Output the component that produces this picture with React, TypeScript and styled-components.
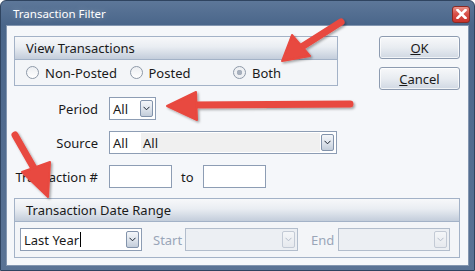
import { createGlobalStyle, styled } from 'styled-components';

const GlobalStyle = createGlobalStyle`
  html, body {
    margin: 0;
    padding: 0;
    background: #ffffff;
  }
  body {
    font-family: 'Noto Sans', 'Open Sans', sans-serif;
    font-size: 13px;
    color: #1a1a1a;
  }
`;

function Chevron({ faded }: { faded?: boolean }) {
  return (
    <svg width="7" height="5" viewBox="0 0 7 5">
      <path
        d="M0.5 0.8 L3.5 3.8 L6.5 0.8"
        fill="none"
        stroke={faded ? '#b4bdca' : '#1c2430'}
        strokeWidth="1"
      />
    </svg>
  );
}

function ComboBox({
  width,
  value,
  extra,
  disabled,
  caret,
}: {
  width: number;
  value?: string;
  extra?: string;
  disabled?: boolean;
  caret?: boolean;
}) {
  return (
    <Combo $width={width} $disabled={disabled}>
      <ComboValue>
        {value}
        {caret && <Caret />}
      </ComboValue>
      {extra !== undefined && <ComboExtra>{extra}</ComboExtra>}
      <DropButton $disabled={disabled}>
        <Chevron faded={disabled} />
      </DropButton>
    </Combo>
  );
}

function Radio({ label, checked }: { label: string; checked?: boolean }) {
  return (
    <RadioItem>
      <RadioCircle $checked={checked} />
      <span>{label}</span>
    </RadioItem>
  );
}

function Arrows() {
  const color = '#e8483f';
  return (
    <ArrowLayer width="475" height="271" viewBox="0 0 475 271">
      <defs>
        <filter id="shadow" x="-20%" y="-20%" width="140%" height="140%">
          <feDropShadow dx="1.5" dy="1.5" stdDeviation="1.2" floodColor="#000" floodOpacity="0.35" />
        </filter>
      </defs>
      <g filter="url(#shadow)" fill={color} stroke={color} strokeLinecap="round" strokeLinejoin="round">
        {/* arrow to "Both" */}
        <line x1="341" y1="22" x2="300" y2="48" strokeWidth="7" />
        <polygon points="282,61 292,35 310,56" strokeWidth="2" />
        {/* arrow to Period */}
        <line x1="350" y1="104" x2="192" y2="105" strokeWidth="7" />
        <polygon points="167,106 196,92 197,120" strokeWidth="2" />
        {/* arrow to date range */}
        <line x1="15" y1="135" x2="35" y2="170" strokeWidth="7" />
        <polygon points="48,197 22,172 50,162" strokeWidth="2" />
      </g>
    </ArrowLayer>
  );
}

export default function App() {
  return (
    <>
      <GlobalStyle />
      <Window>
        <TitleBar>
          <Title>Transaction Filter</Title>
          <CloseButton>
            <svg width="11" height="10" viewBox="0 0 11 10">
              <path d="M1.5 1 L9.5 9 M9.5 1 L1.5 9" stroke="#fff" strokeWidth="2.6" strokeLinecap="square" />
            </svg>
          </CloseButton>
        </TitleBar>
        <Client>
          <TopArea>
            <LeftColumn>
              <Group>
                <GroupHeader>View Transactions</GroupHeader>
                <RadioRow>
                  <Radio label="Non-Posted" />
                  <Radio label="Posted" />
                  <Radio label="Both" checked />
                </RadioRow>
              </Group>
              <FormRows>
                <FormRow>
                  <Label>Period</Label>
                  <ComboBox width={47} value="All" />
                </FormRow>
                <FormRow>
                  <Label>Source</Label>
                  <ComboBox width={228} value="All" extra="All" />
                </FormRow>
                <FormRow>
                  <Label>Transaction #</Label>
                  <TextInput $width={63} />
                  <ToLabel>to</ToLabel>
                  <TextInput $width={63} />
                </FormRow>
              </FormRows>
            </LeftColumn>
            <ButtonColumn>
              <DialogButton>
                <u>O</u>K
              </DialogButton>
              <DialogButton>
                <u>C</u>ancel
              </DialogButton>
            </ButtonColumn>
          </TopArea>
          <Group>
            <GroupHeader>Transaction Date Range</GroupHeader>
            <DateRow>
              <ComboBox width={122} value="Last Year" caret />
              <DimLabel $width={43} $indent={11}>Start</DimLabel>
              <ComboBox width={113} disabled />
              <DimLabel $width={40} $indent={13}>End</DimLabel>
              <ComboBox width={112} disabled />
            </DateRow>
          </Group>
        </Client>
        <Arrows />
      </Window>
    </>
  );
}

const Window = styled.div`
  position: relative;
  width: 475px;
  height: 271px;
  box-sizing: border-box;
  display: flex;
  flex-direction: column;
  padding: 0 5px 4px 5px;
  background: linear-gradient(to bottom, #5d7799 0px, #4a668a 24px, #5a7395 100%);
  border: 1px solid #2f4460;
  border-radius: 6px 6px 0 0;
  overflow: hidden;
`;

const TitleBar = styled.div`
  height: 24px;
  display: flex;
  align-items: center;
  justify-content: space-between;
  padding-left: 7px;
`;

const Title = styled.div`
  font-family: 'Noto Sans', sans-serif;
  font-size: 11.5px;
  color: #ffffff;
  text-shadow: 0 0 6px rgba(255, 255, 255, 0.35);
`;

const CloseButton = styled.div`
  width: 18px;
  height: 17px;
  margin-top: 2px;
  margin-right: -1px;
  box-sizing: border-box;
  display: flex;
  align-items: center;
  justify-content: center;
  border: 1px solid #8a2a24;
  border-radius: 3px;
  background: linear-gradient(to bottom, #e9938a 0%, #d9524a 45%, #c9322a 100%);
`;

const Client = styled.div`
  flex: 1;
  box-sizing: border-box;
  display: flex;
  flex-direction: column;
  gap: 10px;
  padding: 10px 8px 0 7px;
  background: #f5f7fa;
  border: 1px solid #8396b0;
`;

const TopArea = styled.div`
  display: flex;
  justify-content: space-between;
`;

const LeftColumn = styled.div`
  width: 324px;
  display: flex;
  flex-direction: column;
`;

const Group = styled.div`
  border: 1px solid #a3b2c7;
  background: #f3f5f8;
`;

const GroupHeader = styled.div`
  height: 22px;
  display: flex;
  align-items: center;
  padding-left: 11px;
  font-size: 13px;
  color: #1a1a1a;
  background: linear-gradient(to bottom, #f7f8fa 0%, #e9edf2 45%, #c3cddb 100%);
  border-bottom: 1px solid #a3b2c7;
  border-radius: 3px 3px 0 0;
`;

const RadioRow = styled.div`
  height: 25px;
  display: flex;
  align-items: center;
  padding-left: 11px;
`;

const RadioItem = styled.div`
  width: 103.5px;
  display: flex;
  align-items: center;
  gap: 6px;
`;

const RadioCircle = styled.span<{ $checked?: boolean }>`
  width: 11px;
  height: 11px;
  border-radius: 50%;
  border: 1px solid #8e99a8;
  background: ${({ $checked }) =>
    $checked
      ? 'radial-gradient(circle, #a7b0bd 0 2.5px, #eef0f3 3px 100%)'
      : 'linear-gradient(to bottom, #eceef2, #ffffff)'};
`;

const FormRows = styled.div`
  display: flex;
  flex-direction: column;
  gap: 11px;
  padding-top: 11px;
`;

const FormRow = styled.div`
  display: flex;
  align-items: center;
  height: 23px;
`;

const Label = styled.div`
  width: 84px;
  text-align: right;
  margin-right: 11px;
`;

const ToLabel = styled.div`
  width: 31px;
  padding-left: 9px;
  box-sizing: border-box;
`;

const Combo = styled.div<{ $width: number; $disabled?: boolean }>`
  width: ${({ $width }) => $width}px;
  height: 23px;
  box-sizing: border-box;
  display: flex;
  align-items: center;
  border: 1px solid ${({ $disabled }) => ($disabled ? '#b2bdcc' : '#8d9db4')};
  background: ${({ $disabled }) => ($disabled ? '#eceff3' : '#ffffff')};
  padding: 1px 2px 1px 2px;
`;

const ComboValue = styled.div`
  display: flex;
  align-items: center;
  flex: 1;
  height: 100%;
  padding-left: 1px;
  white-space: nowrap;
`;

const Caret = styled.span`
  width: 1px;
  height: 15px;
  background: #000;
  margin-left: 1px;
`;

const ComboExtra = styled.div`
  flex: 0 0 177px;
  align-self: stretch;
  display: flex;
  align-items: center;
  padding-left: 2px;
  margin-right: 1px;
  background: #f0f0f0;
`;

const DropButton = styled.div<{ $disabled?: boolean }>`
  width: 13px;
  height: 17px;
  box-sizing: border-box;
  display: flex;
  align-items: center;
  justify-content: center;
  border: 1px solid ${({ $disabled }) => ($disabled ? '#c3cad5' : '#8293ab')};
  border-radius: 2px;
  background: ${({ $disabled }) =>
    $disabled
      ? 'linear-gradient(to bottom, #f4f6f8, #e6e9ee)'
      : 'linear-gradient(to bottom, #f4f6f9 0%, #dfe5ed 50%, #c3cdda 100%)'};
`;

const TextInput = styled.div<{ $width: number }>`
  width: ${({ $width }) => $width}px;
  height: 23px;
  box-sizing: border-box;
  border: 1px solid #8d9db4;
  background: #ffffff;
`;

const ButtonColumn = styled.div`
  display: flex;
  flex-direction: column;
  gap: 8px;
`;

const DialogButton = styled.div`
  width: 81px;
  height: 23px;
  box-sizing: border-box;
  display: flex;
  align-items: center;
  justify-content: center;
  border: 1px solid #8d9bb0;
  border-radius: 3px;
  background: linear-gradient(to bottom, #f7f8fa 0%, #e8ecf1 50%, #d0d8e3 100%);
  box-shadow: inset 0 0 0 1px rgba(255, 255, 255, 0.7);
`;

const DateRow = styled.div`
  height: 35px;
  display: flex;
  align-items: center;
  padding-left: 5px;
`;

const DimLabel = styled.div<{ $width: number; $indent: number }>`
  width: ${({ $width }) => $width}px;
  box-sizing: border-box;
  padding-left: ${({ $indent }) => $indent}px;
  color: #9aa6b8;
  white-space: nowrap;
`;

const ArrowLayer = styled.svg`
  position: absolute;
  left: -1px;
  top: -1px;
  pointer-events: none;
`;
